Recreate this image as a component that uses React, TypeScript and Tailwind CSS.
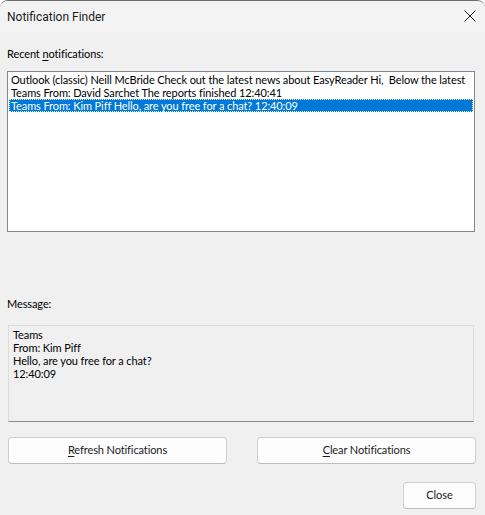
import React from "react";

const rows = [
  "Outlook (classic) Neill McBride Check out the latest news about EasyReader Hi,  Below the latest",
  "Teams From: David Sarchet The reports finished 12:40:41",
  "Teams From: Kim Piff Hello, are you free for a chat? 12:40:09",
];

function Button({ children, className }: { children: React.ReactNode; className: string }) {
  return (
    <button
      className={`flex items-center justify-center rounded-[4px] border border-[#d0d0d0] border-b-[#bcbcbc] bg-[#fdfdfd] text-[#1b1b1b] ${className}`}
    >
      {children}
    </button>
  );
}

export default function App() {
  return (
    <div className="flex h-[515px] w-[485px] flex-col overflow-hidden rounded-t-[8px] border-t border-[#6e6e6e] bg-[#f0f0f0] font-['Lato',sans-serif] text-[11px] tracking-[-0.1px] text-black">
      {/* title bar */}
      <div className="flex h-[31px] shrink-0 items-center justify-between bg-[#f3f3f3] pl-[7px] pr-[8px]">
        <span className="font-['Roboto',sans-serif] text-[12px] tracking-normal text-[#1b1b1b]">Notification Finder</span>
        <svg width="12" height="12" viewBox="0 0 12 12" className="mr-[1px] -mt-[1px]">
          <path d="M0.5 0.5 L11.5 11.5 M11.5 0.5 L0.5 11.5" stroke="#1b1b1b" strokeWidth="1" />
        </svg>
      </div>

      <div className="flex flex-1 flex-col px-[7px]">
        <div className="mt-[15px] h-[14px] leading-[14px]">
          Recent <span className="underline underline-offset-2">n</span>otifications:
        </div>

        <div className="mt-[10px] h-[161px] w-[468px] border border-[#828790] bg-white p-px leading-[13px]">
          {rows.map((r, i) => (
            <div
              key={i}
              className={`h-[13px] whitespace-pre px-[2px] ${
                i === 2 ? "bg-[#0078d7] text-white outline outline-1 outline-dotted outline-[#f0f0f0] -outline-offset-1" : ""
              }`}
            >
              {r}
            </div>
          ))}
        </div>

        <div className="mt-[65px] h-[14px] leading-[14px]">Message:</div>

        <div className="ml-px mt-[14px] h-[97px] w-[466px] border border-[#dcdcdc] border-b-[#8a8a8a] bg-[#f0f0f0] px-[4px] pt-[2px] leading-[13px]">
          <div>Teams</div>
          <div>From: Kim Piff</div>
          <div>Hello, are you free for a chat?</div>
          <div>12:40:09</div>
        </div>

        <div className="ml-px mt-[15px] flex w-[468px] justify-between">
          <Button className="h-[27px] w-[219px]">
            <span>
              <span className="underline underline-offset-2">R</span>efresh Notifications
            </span>
          </Button>
          <Button className="h-[27px] w-[219px]">
            <span>
              <span className="underline underline-offset-2">C</span>lear Notifications
            </span>
          </Button>
        </div>

        <div className="mt-[18px] flex justify-end pr-[2px]">
          <Button className="h-[27px] w-[73px]">Close</Button>
        </div>
      </div>
    </div>
  );
}
